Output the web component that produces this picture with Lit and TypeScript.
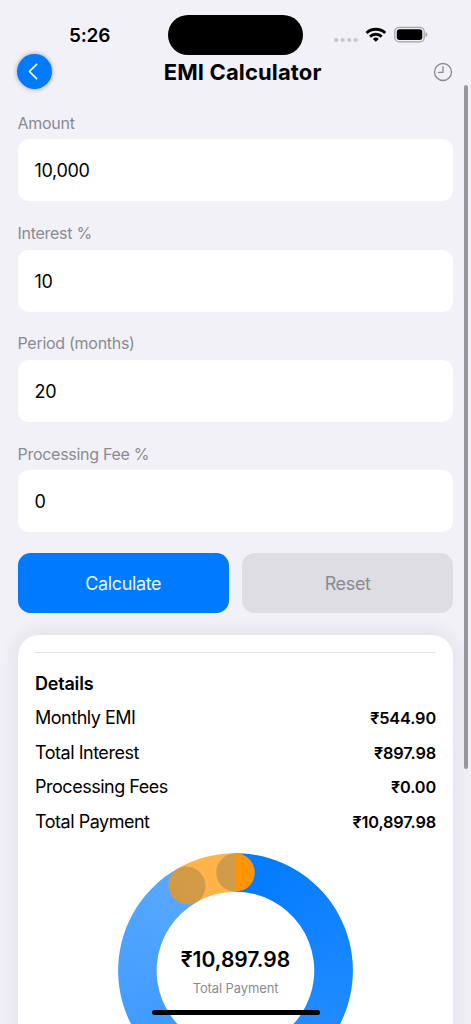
import { LitElement, html, css, svg } from "lit";
import { customElement } from "lit/decorators.js";

const fields = [
  { label: "Amount", value: "10,000" },
  { label: "Interest %", value: "10" },
  { label: "Period (months)", value: "20" },
  { label: "Processing Fee %", value: "0" },
];

const rows = [
  ["Monthly EMI", "₹544.90"],
  ["Total Interest", "₹897.98"],
  ["Processing Fees", "₹0.00"],
  ["Total Payment", "₹10,897.98"],
];

@customElement("app-root")
export class AppRoot extends LitElement {
  static styles = css`
    :host {
      display: flex;
      flex-direction: column;
      position: relative;
      height: 1024px;
      overflow: hidden;
      box-sizing: border-box;
      background: #f2f1f7;
      color: #000;
      font-family: Inter, "Liberation Sans", sans-serif;
      font-size: 18px;
    }
    svg { display: block; }
    .status {
      display: grid;
      grid-template-columns: 168.3px 134.5px 1fr;
      height: 53.5px;
      padding-top: 15px;
      box-sizing: border-box;
      flex: none;
    }
    .time {
      padding-left: 69px;
      font-size: 19px;
      font-weight: 600;
      line-height: 41px;
      letter-spacing: -0.2px;
    }
    .island { height: 39.5px; border-radius: 20px; background: #000; }
    .signals { padding-left: 30.2px; }
    .nav {
      display: grid;
      grid-template-columns: 35px 1fr 20px;
      align-items: center;
      padding: 0 18px 0 17.3px;
      height: 35px;
      flex: none;
    }
    .back {
      width: 35px;
      height: 35px;
      border-radius: 50%;
      background: #007aff;
      box-shadow: 0 0 5px rgba(0, 0, 0, 0.35);
    }
    .title {
      margin: 0;
      text-align: center;
      font-size: 22px;
      font-weight: 700;
      line-height: 36px;
      letter-spacing: 0.14px;
    }
    .form {
      display: flex;
      flex-direction: column;
      padding: 24.4px 17.7px 0 17.5px;
      flex: none;
    }
    .field { height: 110.3px; }
    .label {
      color: #8b8a90;
      font-size: 16px;
      line-height: 21px;
      height: 26.5px;
      letter-spacing: -0.28px;
    }
    .input {
      height: 62px;
      border-radius: 10.5px;
      background: #fff;
      padding-left: 17px;
      line-height: 64px;
      box-sizing: border-box;
      letter-spacing: -0.35px;
    }
    .actions {
      display: grid;
      grid-template-columns: 1fr 1fr;
      gap: 13px;
      padding: 0 17.7px 0 17.5px;
      margin-top: -0.7px;
      flex: none;
    }
    .button {
      height: 60px;
      border-radius: 12.5px;
      text-align: center;
      line-height: 61px;
      letter-spacing: -0.35px;
    }
    .primary { background: #007aff; color: #e8f3ff; }
    .secondary { background: #dedde3; color: #8b8a90; }
    .card {
      margin: 21.7px 17.7px 0 17.5px;
      padding: 17px 17.3px 0 17.5px;
      height: 520px;
      box-sizing: border-box;
      border-radius: 21px;
      background: #fff;
      box-shadow: 0 0 22px rgba(30, 20, 60, 0.1);
      flex: none;
    }
    .rule { height: 1px; background: #e3e3e5; }
    .details {
      margin: 13.5px 0 0;
      font-size: 18px;
      font-weight: 600;
      line-height: 34.6px;
      letter-spacing: -0.2px;
    }
    .row {
      display: flex;
      justify-content: space-between;
      line-height: 34.6px;
      height: 34.6px;
    }
    .name { letter-spacing: -0.48px; }
    .sum { font-size: 16.3px; font-weight: 600; letter-spacing: -0.12px; }
    .chart {
      display: grid;
      width: 235px;
      height: 235px;
      margin: 13.6px auto 0;
    }
    .ring, .center { grid-area: 1 / 1; }
    .blue {
      background: conic-gradient(rgba(0, 122, 255, 1), rgba(0, 122, 255, 0.62));
      clip-path: path("M117.5 .1 A117.4 117.4 0 1 1 59.4 15.5 A19.3 19.3 0 0 1 78.5 49 A78.8 78.8 0 1 0 117.5 38.7 A19.3 19.3 0 0 1 117.5 .1 Z");
    }
    .orange {
      background: conic-gradient(rgba(255, 149, 0, 1), rgba(255, 149, 0, 0.7));
      clip-path: path("M59.4 15.5 A117.4 117.4 0 0 1 117.5 .1 A19.3 19.3 0 0 1 117.5 38.7 A78.8 78.8 0 0 0 78.5 49 A19.3 19.3 0 0 1 59.4 15.5 Z");
    }
    .center { text-align: center; padding-top: 92px; }
    .total { font-size: 21px; font-weight: 600; line-height: 30px; }
    .caption {
      font-size: 13px;
      line-height: 18px;
      padding-top: 4px;
      color: #8b8a90;
      letter-spacing: -0.12px;
    }
    .scrollbar {
      position: absolute;
      left: 464px;
      top: 84.5px;
      width: 3.5px;
      height: 684.5px;
      border-radius: 2px;
      background: #98979c;
    }
    .home {
      position: absolute;
      left: 152px;
      top: 1009.7px;
      width: 168px;
      height: 5.5px;
      border-radius: 3px;
      background: #000;
    }
  `;

  render() {
    return html`
      <div class="status">
        <div class="time">5:26</div>
        <div class="island"></div>
        <svg class="signals" width="96" height="39" viewBox="333 15 96 39">
          <g fill="#c6c5cb">
            ${[336, 342.5, 349, 355.4].map((x) => svg`<circle cx=${x} cy="40" r="2.1" />`)}
          </g>
          <g fill="none" stroke="#000" stroke-width="2.9">
            <path d="M366.3 33 A13.6 13.6 0 0 1 385 33" />
            <path d="M369.8 36.6 A8.6 8.6 0 0 1 381.5 36.6" />
          </g>
          <path d="M375.65 41.8 L372.7 38.9 A4.3 4.3 0 0 1 378.6 38.9 Z" fill="#000" />
          <rect x="394.6" y="27.4" width="29.4" height="14.4" rx="4.4" fill="none" stroke="#a2a1a6" stroke-width="1.2" />
          <rect x="396.6" y="29.3" width="25.5" height="10.7" rx="2.7" />
          <path d="M425.4 32.2 Q427.2 32.8 427.2 34.6 Q427.2 36.4 425.4 37 Z" fill="#a2a1a6" />
        </svg>
      </div>
      <div class="nav">
        <div class="back">
          <svg width="35" height="35" viewBox="0 0 35 35">
            <path d="M19.6 10.4 L12.4 17.5 L19.6 24.6" fill="none" stroke="#fff" stroke-width="1.6" stroke-linecap="round" stroke-linejoin="round" />
          </svg>
        </div>
        <h1 class="title">EMI Calculator</h1>
        <svg class="history" width="20" height="20" viewBox="0 0 20 20">
          <g fill="none" stroke="#8b8a90" stroke-width="1.3" stroke-linecap="round" stroke-linejoin="round">
            <circle cx="10" cy="10" r="8.5" />
            <path d="M10 4.7 V10.4 H5.5" />
          </g>
        </svg>
      </div>
      <div class="form">
        ${fields.map((f) => html`
          <div class="field">
            <div class="label">${f.label}</div>
            <div class="input">${f.value}</div>
          </div>`)}
      </div>
      <div class="actions">
        <div class="button primary">Calculate</div>
        <div class="button secondary">Reset</div>
      </div>
      <div class="card">
        <div class="rule"></div>
        <h2 class="details">Details</h2>
        ${rows.map(([name, sum]) => html`
          <div class="row"><span class="name">${name}</span><span class="sum">${sum}</span></div>`)}
        <div class="chart">
          <div class="ring blue"></div>
          <div class="ring orange"></div>
          <div class="center">
            <div class="total">₹10,897.98</div>
            <div class="caption">Total Payment</div>
          </div>
        </div>
      </div>
      <div class="scrollbar"></div>
      <div class="home"></div>
    `;
  }
}
